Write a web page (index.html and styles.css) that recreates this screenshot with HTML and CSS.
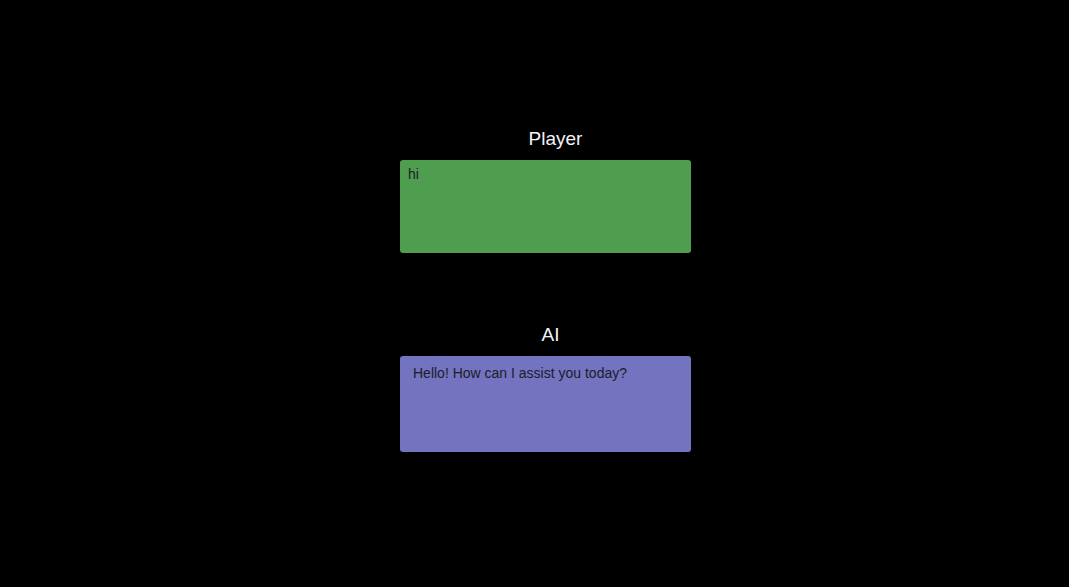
FILE: index.html
```html
<html>
<head>
<link rel="stylesheet" href="styles.css">
</head>
<body>

<div class="chat">
    <div class="panel">
        <div class="panel-label player-label">Player</div>
        <div class="panel-box player-box">hi</div>
    </div>

    <div class="panel">
        <div class="panel-label ai-label">AI</div>
        <div class="panel-box ai-box">Hello! How can I assist you today?</div>
    </div>
</div>

</body>
</html>
```

FILE: styles.css
```css
body {
    margin: 0;
    background-color: #000000;
    font-family: "Liberation Sans", Arial, sans-serif;
}

.chat {
    display: flex;
    flex-direction: column;
    align-items: flex-start;
    padding-top: 127px;
    padding-left: 400px;
    gap: 70px;
}

.panel {
    display: flex;
    flex-direction: column;
    width: 291px;
}

.panel-label {
    color: #f2f2f8;
    font-size: 19px;
    line-height: 24px;
    height: 24px;
    margin-bottom: 9px;
    text-align: center;
}

.player-label {
    padding-left: 20px;
}

.ai-label {
    padding-left: 10px;
}

.panel-box {
    border-radius: 3px;
    color: #1c1c2a;
    font-size: 14px;
    line-height: 17px;
}

.player-box {
    height: 93px;
    padding: 6px 8px;
    box-sizing: border-box;
    background-color: #4f9d4f;
}

.ai-box {
    height: 96px;
    padding: 9px 13px;
    box-sizing: border-box;
    background-color: #7373c0;
}
```
